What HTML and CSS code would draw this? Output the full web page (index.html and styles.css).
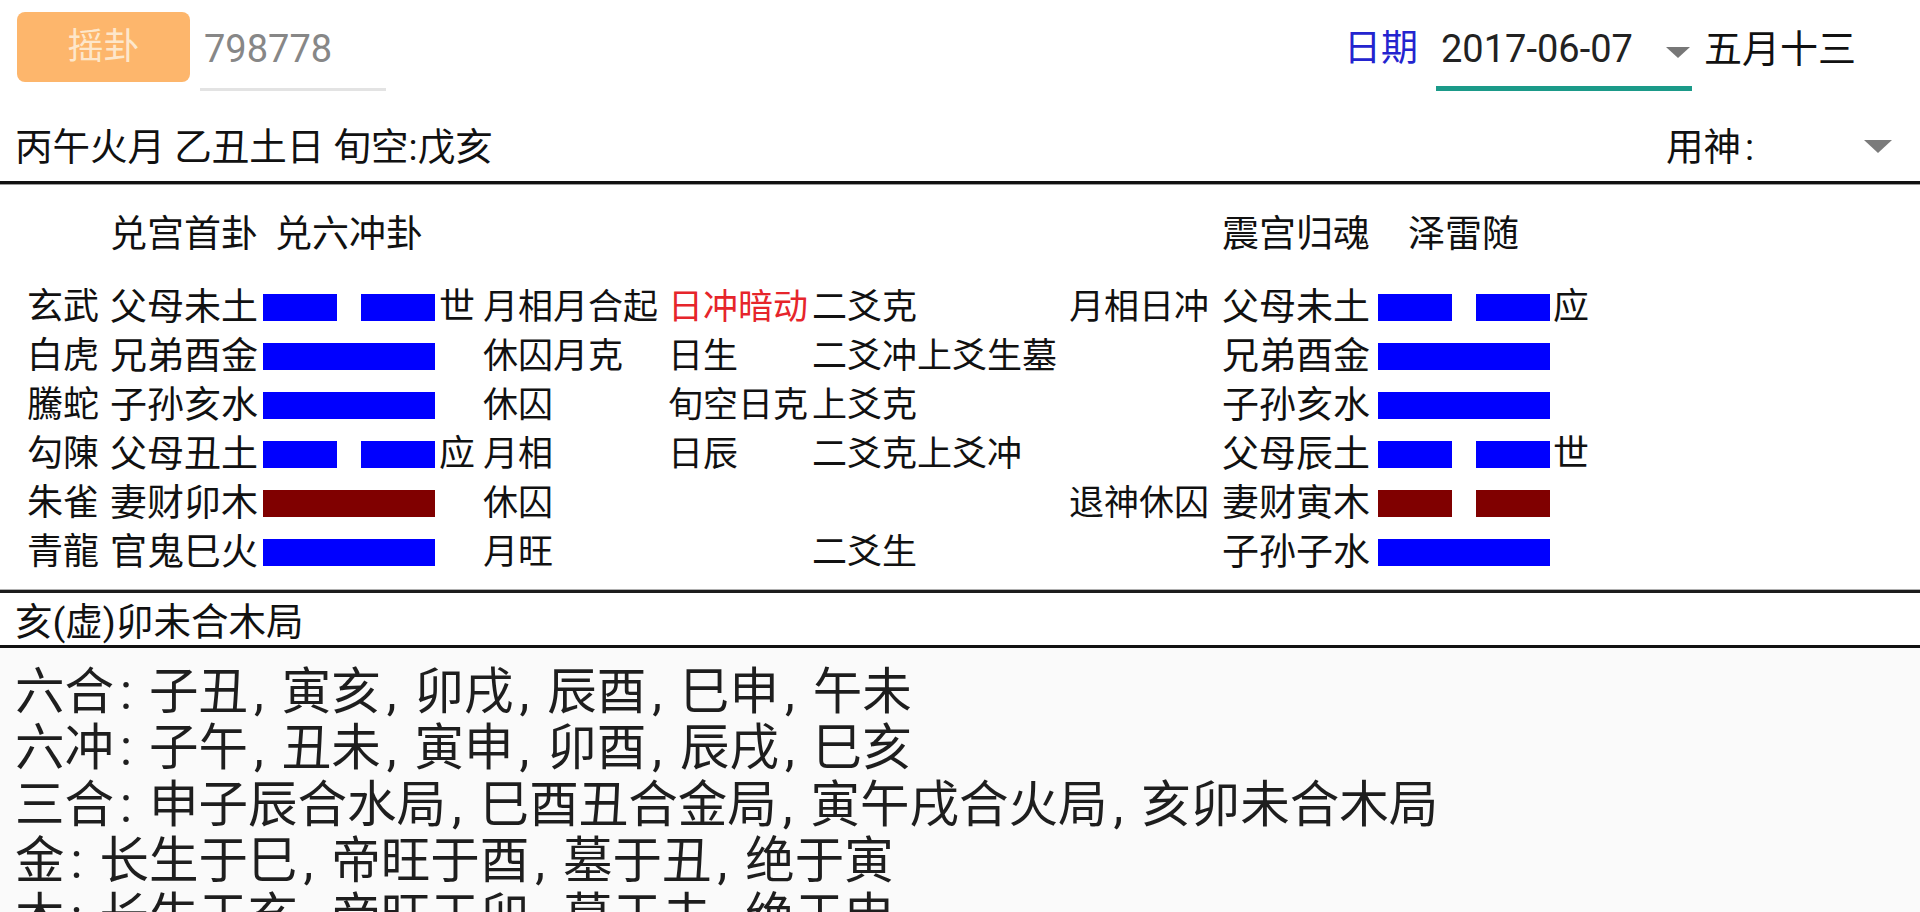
FILE: index.html
```html
<!DOCTYPE html>
<html lang="zh-CN">
<head>
<meta charset="utf-8">
<title>六爻排盘</title>
<link rel="stylesheet" href="styles.css">
</head>
<body>
<div class="app">
  <div class="top">
    <div class="btn">摇卦</div>
    <div class="num">798778</div>
    <div class="date-label">日期</div>
    <div class="date-field"><span class="date-text">2017-06-07</span><span class="caret"></span></div>
    <div class="lunar">五月十三</div>
  </div>

  <div class="info">
    <div class="ganzhi">丙午火月 乙丑土日 旬空:戊亥</div>
    <div class="yongshen"><span class="ys-label">用神<span class="ys-colon">:</span></span><span class="caret ys-caret"></span></div>
  </div>

  <div class="gua">
    <div class="gua-head">
      <div class="head-left">兑宫首卦<span class="hsp"></span>兑六冲卦</div>
      <div class="head-right">震宫归魂<span class="hsp2"></span>泽雷随</div>
    </div>
    <div class="gua-grid">
      <div class="c ls">玄武</div><div class="c nm">父母未土</div><div class="bar yin b"><i></i><i></i></div><div class="c sy">世</div><div class="c an">月相月合起</div><div class="c an red">日冲暗动</div><div class="c an">二爻克</div><div class="c an">月相日冲</div><div class="c nm">父母未土</div><div class="bar yin b"><i></i><i></i></div><div class="c sy2">应</div>

      <div class="c ls">白虎</div><div class="c nm">兄弟酉金</div><div class="bar yang b"></div><div class="c sy"></div><div class="c an">休囚月克</div><div class="c an">日生</div><div class="c an">二爻冲上爻生墓</div><div class="c an"></div><div class="c nm">兄弟酉金</div><div class="bar yang b"></div><div class="c sy2"></div>

      <div class="c ls">騰蛇</div><div class="c nm">子孙亥水</div><div class="bar yang b"></div><div class="c sy"></div><div class="c an">休囚</div><div class="c an">旬空日克</div><div class="c an">上爻克</div><div class="c an"></div><div class="c nm">子孙亥水</div><div class="bar yang b"></div><div class="c sy2"></div>

      <div class="c ls">勾陳</div><div class="c nm">父母丑土</div><div class="bar yin b"><i></i><i></i></div><div class="c sy">应</div><div class="c an">月相</div><div class="c an">日辰</div><div class="c an">二爻克上爻冲</div><div class="c an"></div><div class="c nm">父母辰土</div><div class="bar yin b"><i></i><i></i></div><div class="c sy2">世</div>

      <div class="c ls">朱雀</div><div class="c nm">妻财卯木</div><div class="bar yang r"></div><div class="c sy"></div><div class="c an">休囚</div><div class="c an"></div><div class="c an"></div><div class="c an">退神休囚</div><div class="c nm">妻财寅木</div><div class="bar yin r"><i></i><i></i></div><div class="c sy2"></div>

      <div class="c ls">青龍</div><div class="c nm">官鬼巳火</div><div class="bar yang b"></div><div class="c sy"></div><div class="c an">月旺</div><div class="c an"></div><div class="c an">二爻生</div><div class="c an"></div><div class="c nm">子孙子水</div><div class="bar yang b"></div><div class="c sy2"></div>
    </div>
  </div>

  <div class="sanhe">亥(虚)卯未合木局</div>

  <div class="ref">
    <p>六合<span class="co">:</span>子丑<span class="cm">,</span>寅亥<span class="cm">,</span>卯戌<span class="cm">,</span>辰酉<span class="cm">,</span>巳申<span class="cm">,</span>午未</p>
    <p>六冲<span class="co">:</span>子午<span class="cm">,</span>丑未<span class="cm">,</span>寅申<span class="cm">,</span>卯酉<span class="cm">,</span>辰戌<span class="cm">,</span>巳亥</p>
    <p>三合<span class="co">:</span>申子辰合水局<span class="cm">,</span>巳酉丑合金局<span class="cm">,</span>寅午戌合火局<span class="cm">,</span>亥卯未合木局</p>
    <p>金<span class="co">:</span>长生于巳<span class="cm">,</span>帝旺于酉<span class="cm">,</span>墓于丑<span class="cm">,</span>绝于寅</p>
    <p>木<span class="co">:</span>长生于亥<span class="cm">,</span>帝旺于卯<span class="cm">,</span>墓于未<span class="cm">,</span>绝于申</p>
    <p>水<span class="co">:</span>长生于申<span class="cm">,</span>帝旺于子<span class="cm">,</span>墓于辰<span class="cm">,</span>绝于巳</p>
    <p>火<span class="co">:</span>长生于寅<span class="cm">,</span>帝旺于午<span class="cm">,</span>墓于戌<span class="cm">,</span>绝于亥</p>
  </div>
</div>
</body>
</html>
```

FILE: styles.css
```css
html, body {
  margin: 0;
  padding: 0;
  background: #ffffff;
}

body {
  font-family: Roboto, "Noto Sans CJK SC", "Noto Sans", sans-serif;
  color: #111111;
}

.app {
  width: 1920px;
  height: 912px;
  overflow: hidden;
  display: flex;
  flex-direction: column;
}

/* ---------- top bar ---------- */
.top {
  flex: none;
  display: flex;
  align-items: flex-start;
  height: 96px;
  padding: 0 64px 0 17px;
  box-sizing: border-box;
}

.btn {
  margin-top: 12px;
  width: 173px;
  height: 70px;
  background: #fdb66c;
  border-radius: 8px;
  color: #fde7cb;
  font-size: 36px;
  line-height: 70px;
  text-align: center;
}

.num {
  margin-top: 12px;
  margin-left: 10px;
  width: 182px;
  height: 76px;
  padding-left: 4px;
  border-bottom: 3px solid #e3e3e3;
  color: #878787;
  font-size: 38px;
  line-height: 74px;
}

.date-label {
  margin-left: auto;
  margin-top: 12px;
  color: #2424cf;
  font-size: 37px;
  line-height: 74px;
}

.date-field {
  margin-top: 12px;
  margin-left: 18px;
  width: 251px;
  height: 74px;
  padding-left: 5px;
  border-bottom: 5px solid #1b9a89;
  display: flex;
  align-items: center;
  color: #222222;
  font-size: 38px;
}

.date-field .caret {
  margin-left: auto;
  margin-right: 2px;
  margin-top: 7px;
}

.lunar {
  margin-top: 12px;
  margin-left: 12px;
  font-size: 38px;
  line-height: 74px;
  color: #111111;
}

.caret {
  display: block;
  width: 0;
  height: 0;
  border-left: 12px solid transparent;
  border-right: 12px solid transparent;
  border-top: 11px solid #777777;
}

/* ---------- info row ---------- */
.info {
  flex: none;
  display: flex;
  align-items: center;
  height: 88px;
  padding: 10px 28px 0 15px;
  box-sizing: border-box;
  border-bottom: 3px solid #111111;
  box-shadow: 0 1px 0 #9a9a9a;
  font-size: 37.5px;
}

.ganzhi {
  white-space: nowrap;
}

.yongshen {
  margin-left: auto;
  display: flex;
  align-items: center;
}

.ys-colon {
  margin-left: 4px;
}

.ys-caret {
  margin-left: 110px;
  margin-top: 6px;
  border-left-width: 14px;
  border-right-width: 14px;
  border-top-width: 13px;
  border-top-color: #7b7b7b;
}

/* ---------- gua section ---------- */
.gua {
  flex: none;
  padding: 26px 0 13px 27px;
  border-bottom: 3px solid #1c1c1c;
  box-shadow: 0 -1px 0 #b0b0b0 inset;
}

.gua-head {
  display: flex;
  height: 49px;
  line-height: 49px;
  margin-bottom: 24px;
  font-size: 37px;
}

.head-left {
  margin-left: 83px;
  width: 1112px;
  white-space: nowrap;
}

.hsp {
  display: inline-block;
  width: 17px;
}

.hsp2 {
  display: inline-block;
  width: 38px;
}

.head-right {
  white-space: nowrap;
}

.gua-grid {
  display: grid;
  grid-template-columns: 83px 153px 172px 48px 185px 144px 257px 153px 156px 172px auto;
  grid-auto-rows: 49px;
  align-items: center;
}

.c {
  white-space: nowrap;
  line-height: 49px;
}

.ls {
  font-size: 36px;
}

.nm {
  font-size: 37px;
}

.sy {
  font-size: 36px;
  padding-left: 4px;
}

.sy2 {
  font-size: 36px;
  padding-left: 3px;
}

.an {
  font-size: 35px;
}

.red {
  color: #e6252b;
}

.bar {
  height: 27px;
  display: flex;
  justify-content: space-between;
}

.bar i {
  display: block;
  width: 74px;
  height: 27px;
}

.yang.b,
.yin.b i {
  background: #0000ff;
}

.yang.r,
.yin.r i {
  background: #800000;
}

/* ---------- sanhe row ---------- */
.sanhe {
  flex: none;
  height: 55px;
  padding: 5px 0 0 15px;
  box-sizing: border-box;
  line-height: 48px;
  font-size: 37.5px;
  border-bottom: 3px solid #111111;
  box-shadow: 0 1px 0 #a8a8a8;
}

/* ---------- reference text ---------- */
.ref {
  flex: 1;
  overflow: hidden;
  background: #fafafa;
  padding: 16px 15px 0 15px;
  color: #1e1e1e;
  font-size: 49.5px;
  line-height: 56.3px;
}

.ref p {
  margin: 0;
  white-space: nowrap;
}

.co {
  margin: 0 17px 0 6px;
}

.cm {
  margin: 0 18px 0 6px;
}
```
